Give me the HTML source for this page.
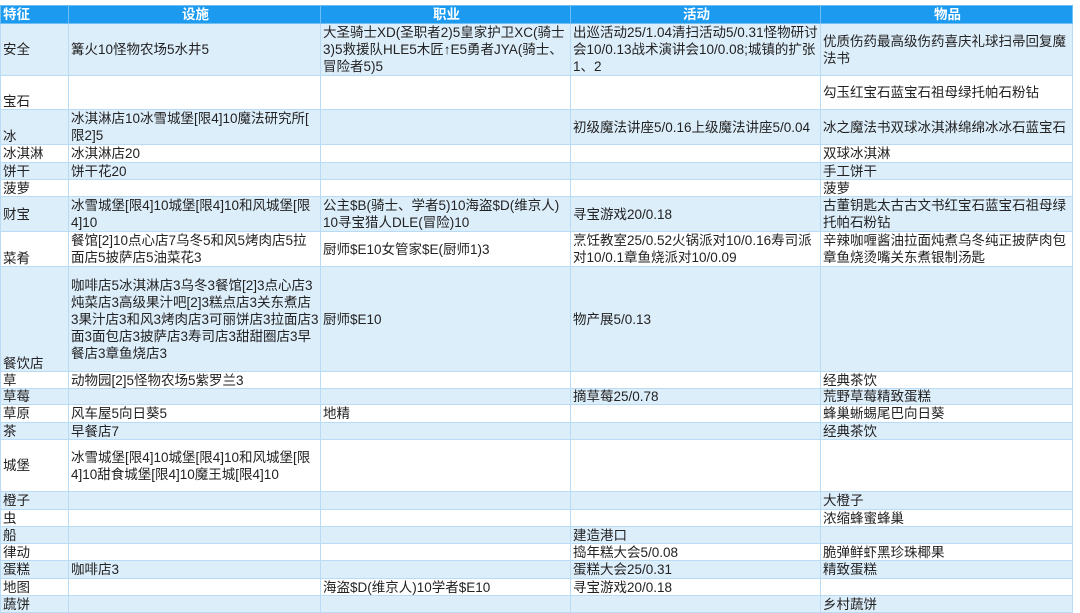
<!DOCTYPE html>
<html><head><meta charset="utf-8"><style>
html,body{margin:0;padding:0;background:#fff;width:1080px;height:606px;overflow:hidden}
table{position:absolute;left:0;top:5px;border-collapse:collapse;table-layout:fixed;width:1072px;
font-family:"Liberation Sans","Noto Sans CJK SC",sans-serif;font-size:13.5px;line-height:15px;color:#222}
td{border:1px solid #b9dbf5;padding:0 0 0 2px;vertical-align:middle;white-space:nowrap;overflow:hidden}
td div{line-height:17px}
tr.h td{background:#1b9af0;color:#fff;font-weight:bold;text-align:center;border-color:#6fbdf5;height:17px}
tr.h td:first-child{text-align:left}
tr.b td{background:#ddeefb}
.bt{vertical-align:bottom}
</style></head><body>
<table>
<col style="width:68px"><col style="width:252px"><col style="width:250px"><col style="width:250px"><col style="width:252px">
<tr class="h"><td>特征</td><td>设施</td><td>职业</td><td>活动</td><td>物品</td></tr>
<tr class="b" style="height:52px"><td>安全</td><td>篝火10怪物农场5水井5</td><td><div>大圣骑士XD(圣职者2)5皇家护卫XC(骑士<br>3)5救援队HLE5木匠↑E5勇者JYA(骑士、<br>冒险者5)5</div></td><td><div>出巡活动25/1.04清扫活动5/0.31怪物研讨<br>会10/0.13战术演讲会10/0.08;城镇的扩张<br>1、2</div></td><td><div>优质伤药最高级伤药喜庆礼球扫帚回复魔<br>法书</div></td></tr>
<tr style="height:34px"><td class="bt">宝石</td><td></td><td></td><td></td><td>勾玉红宝石蓝宝石祖母绿托帕石粉钻</td></tr>
<tr class="b" style="height:35px"><td class="bt">冰</td><td><div>冰淇淋店10冰雪城堡[限4]10魔法研究所[<br>限2]5</div></td><td></td><td>初级魔法讲座5/0.16上级魔法讲座5/0.04</td><td>冰之魔法书双球冰淇淋绵绵冰冰石蓝宝石</td></tr>
<tr style="height:18px"><td>冰淇淋</td><td>冰淇淋店20</td><td></td><td></td><td>双球冰淇淋</td></tr>
<tr class="b" style="height:17px"><td>饼干</td><td>饼干花20</td><td></td><td></td><td>手工饼干</td></tr>
<tr style="height:17px"><td>菠萝</td><td></td><td></td><td></td><td>菠萝</td></tr>
<tr class="b" style="height:35px"><td>财宝</td><td><div>冰雪城堡[限4]10城堡[限4]10和风城堡[限<br>4]10</div></td><td><div>公主$B(骑士、学者5)10海盗$D(维京人)<br>10寻宝猎人DLE(冒险)10</div></td><td>寻宝游戏20/0.18</td><td><div>古董钥匙太古古文书红宝石蓝宝石祖母绿<br>托帕石粉钻</div></td></tr>
<tr style="height:35px"><td class="bt">菜肴</td><td><div>餐馆[2]10点心店7乌冬5和风5烤肉店5拉<br>面店5披萨店5油菜花3</div></td><td>厨师$E10女管家$E(厨师1)3</td><td><div>烹饪教室25/0.52火锅派对10/0.16寿司派<br>对10/0.1章鱼烧派对10/0.09</div></td><td><div>辛辣咖喱酱油拉面炖煮乌冬纯正披萨肉包<br>章鱼烧烫嘴关东煮银制汤匙</div></td></tr>
<tr class="b" style="height:105px"><td class="bt">餐饮店</td><td><div>咖啡店5冰淇淋店3乌冬3餐馆[2]3点心店3<br>炖菜店3高级果汁吧[2]3糕点店3关东煮店<br>3果汁店3和风3烤肉店3可丽饼店3拉面店3<br>面3面包店3披萨店3寿司店3甜甜圈店3早<br>餐店3章鱼烧店3</div></td><td>厨师$E10</td><td>物产展5/0.13</td><td></td></tr>
<tr style="height:17px"><td>草</td><td>动物园[2]5怪物农场5紫罗兰3</td><td></td><td></td><td>经典茶饮</td></tr>
<tr class="b" style="height:16px"><td>草莓</td><td></td><td></td><td>摘草莓25/0.78</td><td>荒野草莓精致蛋糕</td></tr>
<tr style="height:18px"><td>草原</td><td>风车屋5向日葵5</td><td>地精</td><td></td><td>蜂巢蜥蜴尾巴向日葵</td></tr>
<tr class="b" style="height:17px"><td>茶</td><td>早餐店7</td><td></td><td></td><td>经典茶饮</td></tr>
<tr style="height:52px"><td>城堡</td><td><div>冰雪城堡[限4]10城堡[限4]10和风城堡[限<br>4]10甜食城堡[限4]10魔王城[限4]10</div></td><td></td><td></td><td></td></tr>
<tr class="b" style="height:18px"><td>橙子</td><td></td><td></td><td></td><td>大橙子</td></tr>
<tr style="height:17px"><td>虫</td><td></td><td></td><td></td><td>浓缩蜂蜜蜂巢</td></tr>
<tr class="b" style="height:17px"><td>船</td><td></td><td></td><td>建造港口</td><td></td></tr>
<tr style="height:17px"><td>律动</td><td></td><td></td><td>捣年糕大会5/0.08</td><td>脆弹鲜虾黑珍珠椰果</td></tr>
<tr class="b" style="height:18px"><td>蛋糕</td><td>咖啡店3</td><td></td><td>蛋糕大会25/0.31</td><td>精致蛋糕</td></tr>
<tr style="height:17px"><td>地图</td><td></td><td>海盗$D(维京人)10学者$E10</td><td>寻宝游戏20/0.18</td><td></td></tr>
<tr class="b" style="height:17px"><td>蔬饼</td><td></td><td></td><td></td><td>乡村蔬饼</td></tr>
</table>
</body></html>
